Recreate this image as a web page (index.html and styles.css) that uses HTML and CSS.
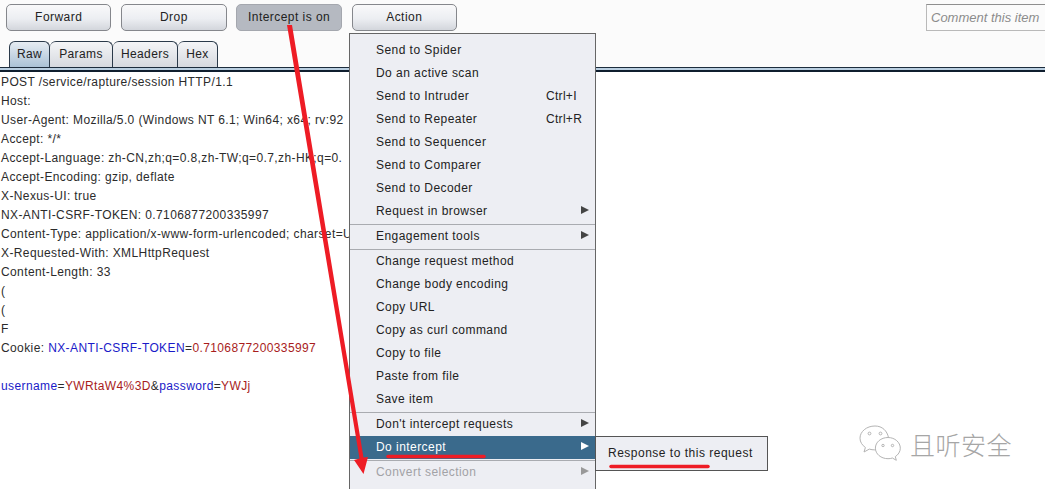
FILE: index.html
```html
<!DOCTYPE html>
<html lang="en">
<head>
<meta charset="utf-8">
<title>Intercept</title>
<link rel="stylesheet" href="styles.css">
</head>
<body>
<div class="page">
  <header class="toolbar">
    <div class="actions">
      <button class="btn">Forward</button>
      <button class="btn">Drop</button>
      <button class="btn on">Intercept is on</button>
      <button class="btn">Action</button>
    </div>
    <div class="comment">Comment this item</div>
  </header>
  <nav class="tabs">
    <span class="tab active">Raw</span>
    <span class="tab">Params</span>
    <span class="tab">Headers</span>
    <span class="tab">Hex</span>
  </nav>
  <div class="rule"></div>
  <main class="request">
    <div class="line">POST /service/rapture/session HTTP/1.1</div>
    <div class="line">Host:</div>
    <div class="line">User-Agent: Mozilla/5.0 (Windows NT 6.1; Win64; x64; rv:92</div>
    <div class="line">Accept: */*</div>
    <div class="line">Accept-Language: zh-CN,zh;q=0.8,zh-TW;q=0.7,zh-HK;q=0.</div>
    <div class="line">Accept-Encoding: gzip, deflate</div>
    <div class="line">X-Nexus-UI: true</div>
    <div class="line">NX-ANTI-CSRF-TOKEN: 0.7106877200335997</div>
    <div class="line">Content-Type: application/x-www-form-urlencoded; charset=U</div>
    <div class="line">X-Requested-With: XMLHttpRequest</div>
    <div class="line">Content-Length: 33</div>
    <div class="line">(</div>
    <div class="line">(</div>
    <div class="line">F</div>
    <div class="line">Cookie: <span class="key">NX-ANTI-CSRF-TOKEN</span>=<span class="val">0.7106877200335997</span></div>
    <div class="line">&nbsp;</div>
    <div class="line"><span class="key">username</span>=<span class="val">YWRtaW4%3D</span>&amp;<span class="key">password</span>=<span class="val">YWJj</span></div>
  </main>

  <div class="menu">
    <div class="item"><span>Send to Spider</span></div>
    <div class="item"><span>Do an active scan</span></div>
    <div class="item"><span>Send to Intruder</span><span class="key-hint">Ctrl+I</span></div>
    <div class="item"><span>Send to Repeater</span><span class="key-hint">Ctrl+R</span></div>
    <div class="item"><span>Send to Sequencer</span></div>
    <div class="item"><span>Send to Comparer</span></div>
    <div class="item"><span>Send to Decoder</span></div>
    <div class="item sub"><span>Request in browser</span></div>
    <div class="sep"></div>
    <div class="item sub"><span>Engagement tools</span></div>
    <div class="sep"></div>
    <div class="item"><span>Change request method</span></div>
    <div class="item"><span>Change body encoding</span></div>
    <div class="item"><span>Copy URL</span></div>
    <div class="item"><span>Copy as curl command</span></div>
    <div class="item"><span>Copy to file</span></div>
    <div class="item"><span>Paste from file</span></div>
    <div class="item"><span>Save item</span></div>
    <div class="sep"></div>
    <div class="item sub"><span>Don't intercept requests</span></div>
    <div class="item sub selected"><span>Do intercept</span></div>
    <div class="sep"></div>
    <div class="item sub disabled"><span>Convert selection</span></div>
  </div>

  <div class="submenu">Response to this request</div>

  <div class="watermark">
    <svg class="wechat" width="42" height="38" viewBox="0 0 42 38" fill="none" stroke="#b4b4b4" stroke-width="1">
      <path d="M16 1C7.500 1 1 6.600 1 13.200c0 3.900 2.200 7 5.400 9.300L5 27l5.300-2.900c1.800.5 3.600.8 5.500.8h1"/>
      <path d="M29.500 12.600C28.200 6 23.400 1 16 1"/>
      <circle cx="10.500" cy="8.500" r="1.400"/>
      <circle cx="21.500" cy="8.500" r="1.400"/>
      <path d="M29 12.500c-7 0-12.600 4.700-12.600 10.600S22 33.700 29 33.700c1.600 0 3-.2 4.400-.7l3.900 2.300-1-3.700c3-1.900 5-5 5-8.400 0-5.900-5.500-10.700-12.300-10.700z"/>
      <circle cx="24" cy="20.500" r="1.200"/>
      <circle cx="33.500" cy="20.500" r="1.200"/>
    </svg>
    <span class="brand">且听安全</span>
  </div>

  <svg class="marks" width="1045" height="489" viewBox="0 0 1045 489" aria-hidden="true">
    <path class="red-fill" d="M287 25H292L363.500 457.500L368 457L363.500 474L354 460L359.500 458.500Z"/>
    <path class="red-line" d="M388 456.500H484"/>
    <path class="red-line" d="M611 466.500H708"/>
  </svg>
</div>
</body>
</html>
```
FILE: styles.css
```css
* { box-sizing: border-box; }
html, body { margin: 0; padding: 0; }
body {
  background: #fff;
  font-family: "Liberation Sans", Arial, sans-serif;
  font-size: 12px;
  color: #222;
}
.page {
  position: relative;
  width: 1045px;
  height: 489px;
  overflow: hidden;
}
.toolbar {
  display: flex;
  justify-content: space-between;
  align-items: flex-start;
  height: 41px;
  padding: 4px 0 0 6px;
  background: #fbfbfb;
}
.actions { display: flex; gap: 9.800px; }
.btn {
  width: 105.400px;
  height: 27px;
  padding: 0 0 1px;
  border: 1px solid #85878c;
  border-radius: 5px;
  background: linear-gradient(#f9f9fa, #eceef2 55%, #d3d6dc);
  font: 12px "Liberation Sans", Arial, sans-serif;
  letter-spacing: .45px;
  color: #222;
}
.btn.on {
  background: #b5b9c1;
  border-color: #a4a7ae;
}
.comment {
  width: 119px;
  height: 27px;
  padding: 5px 0 0 4px;
  background: #fbfbfb;
  border: 1px solid #b9b9b9;
  border-top-color: #8f8f8f;
  border-right: 0;
  color: #8c8c8c;
  font-style: italic;
  font-size: 13px;
  white-space: nowrap;
}
.tabs {
  display: flex;
  height: 26px;
  padding-left: 9px;
  background: #fbfbfb;
}
.tab {
  display: flex;
  align-items: center;
  justify-content: center;
  width: 41px;
  border: 1px solid #2b3a4a;
  border-bottom: 0;
  border-radius: 6px 6px 0 0;
  background: linear-gradient(#f4f5f7, #d6d9df);
  letter-spacing: .4px;
  padding-bottom: 2px;
  color: #222;
}
.tab + .tab { border-left: 0; }
.tab:nth-child(2) { width: 63px; }
.tab:nth-child(3) { width: 65px; }
.tab:nth-child(4) { width: 40px; }
.tab.active { background: linear-gradient(#e6ecf2, #abc2d6); }
.rule {
  height: 5px;
  background: #b9cee0;
  border-top: 1px solid #1c2c3c;
  border-bottom: 2px solid #0f1e2e;
}
.request { padding: 1px 0 0 1px; }
.line {
  height: 19px;
  line-height: 19px;
  letter-spacing: .39px;
  white-space: nowrap;
  color: #2b2b2b;
}
.key { color: #1a1ac8; }
.val { color: #a81c1c; }
.menu {
  position: absolute;
  left: 349px;
  top: 33px;
  width: 247px;
  height: 470px;
  padding: 5px 0 0;
  background: #edeef3;
  border: 1px solid #666;
}
.item {
  display: flex;
  align-items: center;
  justify-content: space-between;
  position: relative;
  height: 23px;
  padding: 0 13px 2px 26px;
  letter-spacing: .45px;
  color: #222;
}
.key-hint { width: 36px; letter-spacing: .3px; }
.sub::after {
  content: "";
  position: absolute;
  right: 6px;
  top: 6px;
  border-left: 8px solid #444;
  border-top: 4.500px solid transparent;
  border-bottom: 4.500px solid transparent;
}
.selected { background: #3a6a8c; color: #fff; }
.selected::after { border-left-color: #fff; }
.disabled { color: #a2a2a6; }
.disabled::after { border-left-color: #999; }
.sep {
  height: 2px;
  background: linear-gradient(transparent 50%, #a9abb0 50%);
}
.submenu {
  position: absolute;
  left: 595px;
  top: 436px;
  width: 173px;
  height: 35px;
  padding: 0 0 2px 12px;
  display: flex;
  align-items: center;
  background: #edeef3;
  border: 1px solid #555;
  letter-spacing: .5px;
  color: #222;
}
.watermark {
  position: absolute;
  left: 859px;
  top: 424px;
  display: flex;
  align-items: center;
  gap: 9px;
}
.brand {
  font-family: "Noto Sans CJK SC", sans-serif;
  font-size: 25px;
  font-weight: 300;
  line-height: 40px;
  color: #a6a6a6;
  letter-spacing: .5px;
}
.marks {
  position: absolute;
  left: 0;
  top: 0;
  pointer-events: none;
}
.red-fill { fill: #ee1c25; }
.red-line {
  fill: none;
  stroke: #ee1c25;
  stroke-width: 3.500;
  stroke-linecap: round;
}
```
